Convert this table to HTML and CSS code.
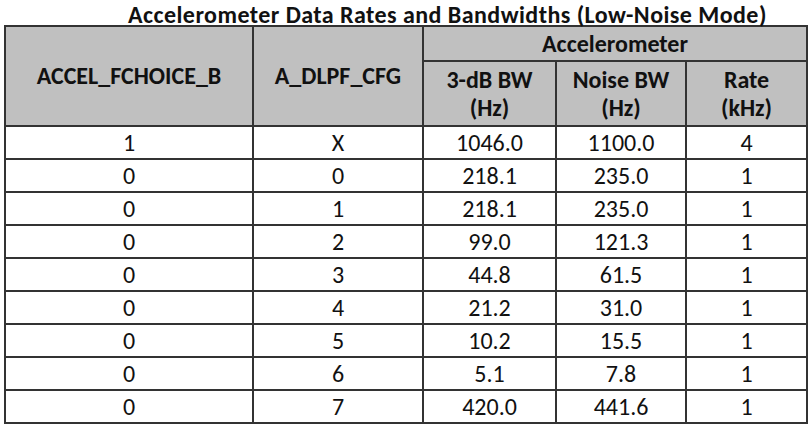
FILE: index.html
```html
<!DOCTYPE html>
<html lang="en">
<head>
  <meta charset="UTF-8" />
  <title>Accelerometer Data Rates and Bandwidths</title>
  <link rel="stylesheet" href="styles.css">
</head>
<body>
  <h1 class="caption">Accelerometer Data Rates and Bandwidths (Low-Noise Mode)</h1>

  <table class="rates">
    <colgroup>
      <col class="c1"><col class="c2"><col class="c3"><col class="c4"><col class="c5">
    </colgroup>
    <thead>
      <tr class="group-row">
        <th rowspan="2">ACCEL_FCHOICE_B</th>
        <th rowspan="2">A_DLPF_CFG</th>
        <th colspan="3">Accelerometer</th>
      </tr>
      <tr class="sub-row">
        <th>3-dB BW<br>(Hz)</th>
        <th>Noise BW<br>(Hz)</th>
        <th>Rate<br>(kHz)</th>
      </tr>
    </thead>
    <tbody>
      <tr><td>1</td><td>X</td><td>1046.0</td><td>1100.0</td><td>4</td></tr>
      <tr><td>0</td><td>0</td><td>218.1</td><td>235.0</td><td>1</td></tr>
      <tr><td>0</td><td>1</td><td>218.1</td><td>235.0</td><td>1</td></tr>
      <tr><td>0</td><td>2</td><td>99.0</td><td>121.3</td><td>1</td></tr>
      <tr><td>0</td><td>3</td><td>44.8</td><td>61.5</td><td>1</td></tr>
      <tr><td>0</td><td>4</td><td>21.2</td><td>31.0</td><td>1</td></tr>
      <tr><td>0</td><td>5</td><td>10.2</td><td>15.5</td><td>1</td></tr>
      <tr><td>0</td><td>6</td><td>5.1</td><td>7.8</td><td>1</td></tr>
      <tr><td>0</td><td>7</td><td>420.0</td><td>441.6</td><td>1</td></tr>
    </tbody>
  </table>
</body>
</html>
```

FILE: styles.css
```css
body {
  margin: 0;
  background: #fff;
  color: #111;
  font-family: Carlito, Lato, 'Liberation Sans', sans-serif;
}
.caption {
  margin: 0;
  height: 25px;
  padding-left: 128px;
  font-size: 24px;
  line-height: 29px;
  letter-spacing: 0.45px;
  font-weight: 700;
  white-space: nowrap;
}
.rates {
  margin-left: 4px;
  width: 802px;
  border-collapse: collapse;
  table-layout: fixed;
  font-size: 24px;
}
.c1 { width: 248px; }
.c2 { width: 170px; }
.c3 { width: 133px; }
.c4 { width: 130px; }
.c5 { width: 121px; }
th, td {
  border: 2px solid #333;
  text-align: center;
  padding: 0;
}
th {
  background: #c0c0c0;
  font-weight: 700;
  line-height: 28px;
}
.group-row th {
  height: 33px;
}
.sub-row th {
  height: 63px;
}
td {
  height: 31px;
  line-height: 26px;
}
```
